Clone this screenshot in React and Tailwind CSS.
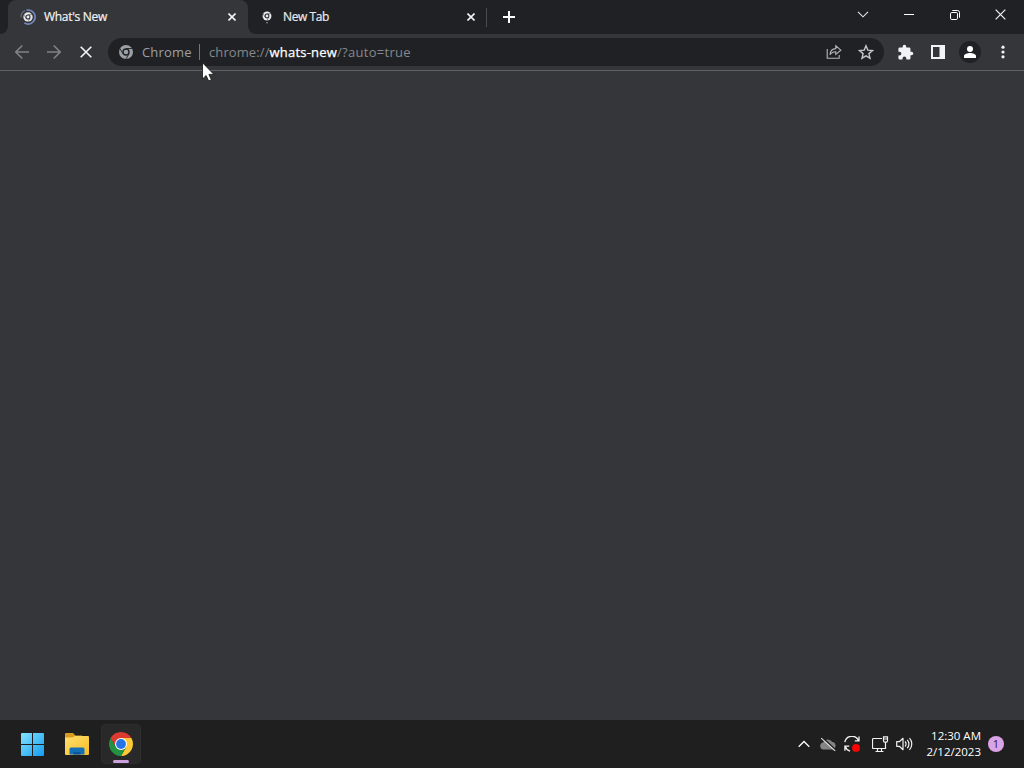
import React from 'react';

function ChromeMark({ size = 14, color = '#9aa0a6', gap = '#202124' }) {
  return (
    <svg width={size} height={size} viewBox="-12 -12 24 24">
      <circle r="12" fill={color} />
      <circle r="6.3" fill={gap} />
      <path d="M0-6H10.4M5.2 3L0 12M-5.2 3L-10.4-6" stroke={gap} strokeWidth="1.5" />
      <circle r="4" fill={color} />
    </svg>
  );
}

function ChromeLogo() {
  return (
    <svg width="24" height="24" viewBox="-12 -12 24 24">
      <path d="M-10.39-6A12 12 0 0 1 10.39-6H0L-5.2 3Z" fill="#dd3b30" />
      <path d="M10.39-6A12 12 0 0 1 0 12L5.2 3L0-6Z" fill="#fcc934" />
      <path d="M0 12A12 12 0 0 1-10.39-6L-5.2 3H5.2Z" fill="#229342" />
      <circle r="6" fill="#fff" />
      <circle r="4.9" fill="#2474e5" />
    </svg>
  );
}

function CloseIcon({ size = 8, width = 2 }) {
  return (
    <svg width={size} height={size} viewBox="0 0 10 10" fill="none" stroke="#f1f3f4" strokeWidth={width}>
      <path d="M.6.6l8.8 8.8M9.4.6L.6 9.4" />
    </svg>
  );
}

function LoadingFavicon() {
  return (
    <svg width="16" height="16" viewBox="-8 -8 16 16">
      <path d="M-1.5-6.8A7 7 0 1 1-3.7 5.9" fill="none" stroke="#7486bd" strokeWidth="1.7" />
      <path d="M-7 .5A7 7 0 0 1-3-6.3" fill="none" stroke="#626779" strokeWidth="1.3" />
      <g transform="scale(.39)">
        <circle r="12" fill="#e8eaed" />
        <circle r="6.6" fill="#35363a" />
        <path d="M0-6H10.4M5.2 3L0 12M-5.2 3L-10.4-6" stroke="#35363a" strokeWidth="1.3" />
        <circle r="3.8" fill="#e8eaed" />
      </g>
    </svg>
  );
}

function TabStrip() {
  return (
    <div className="flex h-[34px] bg-[#202124]">
      <div className="w-2 bg-[#35363a]">
        <div className="h-full rounded-br-lg bg-[#202124]" />
      </div>
      <div className="flex h-full w-[240px] items-center rounded-t-lg bg-[#35363a] pl-3 pr-3">
        <LoadingFavicon />
        <span className="ml-2 flex-1 whitespace-nowrap text-[12px] leading-4 tracking-[-0.3px] text-[#f1f3f4] [-webkit-text-stroke:0.2px]">What's New</span>
        <CloseIcon />
      </div>
      <div className="w-[238px] bg-[#35363a]">
        <div className="flex h-full items-center rounded-bl-lg bg-[#202124] pl-[14px] pr-[11px]">
          <svg width="10" height="14" viewBox="-5 -6 10 14">
            <g transform="scale(.37)">
              <circle r="12" fill="#e8eaed" />
              <circle r="6.6" fill="#202124" />
              <path d="M0-6H10.4M5.2 3L0 12M-5.2 3L-10.4-6" stroke="#202124" strokeWidth="1.3" />
              <circle r="3.8" fill="#e8eaed" />
            </g>
            <circle cy="6.7" r=".8" fill="#9aa0a6" />
          </svg>
          <span className="ml-[11px] flex-1 whitespace-nowrap text-[12px] leading-4 tracking-[-0.4px] text-[#e8eaed] [-webkit-text-stroke:0.2px]">New Tab</span>
          <CloseIcon />
        </div>
      </div>
      <div className="mt-2 h-[19px] w-px bg-[#4a4c50]" />
      <div className="flex w-11 items-center justify-center">
        <svg width="12" height="12" viewBox="0 0 12 12" stroke="#fff" strokeWidth="2">
          <path d="M6 0v12M0 6h12" />
        </svg>
      </div>
      <div className="ml-auto flex h-[29px] text-white">
        <div className="flex w-[46px] items-center justify-center">
          <svg width="12" height="7" viewBox="0 0 12 7" fill="none" stroke="#e8eaed" strokeWidth="1.1">
            <path d="M1 .8l5 5 5-5" />
          </svg>
        </div>
        <div className="flex w-[46px] items-center justify-center">
          <div className="h-px w-[10px] bg-white" />
        </div>
        <div className="flex w-[46px] items-center justify-center">
          <svg width="10" height="10" viewBox="0 0 10 10" fill="none" stroke="#fff">
            <rect x=".5" y="2.5" width="7" height="7" rx="1.3" />
            <path d="M2.3.5H7.5a2 2 0 0 1 2 2V7.7" />
          </svg>
        </div>
        <div className="flex w-[46px] items-center justify-center pr-px">
          <CloseIcon size={11} width={1.1} />
        </div>
      </div>
    </div>
  );
}

function Toolbar() {
  return (
    <div className="flex h-[37px] items-center border-b border-[#606164] bg-[#35363a] pl-[14px]">
      <svg className="mr-4" width="16" height="16" viewBox="0 0 16 16" fill="none" stroke="#818388" strokeWidth="1.6">
        <path d="M15 8H2M8.3 1.5L1.8 8l6.5 6.5" />
      </svg>
      <svg className="mr-4" width="16" height="16" viewBox="0 0 16 16" fill="none" stroke="#818388" strokeWidth="1.6">
        <path d="M1 8h13M7.7 1.5L14.2 8l-6.5 6.5" />
      </svg>
      <div className="mr-[14px] flex w-4 justify-center">
        <CloseIcon size={12} width={1.4} />
      </div>
      <div className="flex h-7 w-[776px] items-center whitespace-nowrap rounded-full bg-[#202124] pl-[11px] pr-[10px] text-[13px] leading-4">
        <ChromeMark />
        <span className="ml-[9px] w-[57px] tracking-[0.18px] text-[#9aa0a6]">Chrome</span>
        <div className="mb-px h-4 w-px bg-[#74777b]" />
        <span className="ml-[9px] flex-1 tracking-[0.2px] text-[#85888c]">
          <span className="tracking-[0.1px]">chrome://</span>
          <span className="text-white [-webkit-text-stroke:0.25px]">whats-new</span>
          <span className="tracking-[0.3px]">/?auto=true</span>
        </span>
        <svg width="16" height="16" viewBox="0 0 16 16" fill="none" stroke="#b4b6ba" strokeWidth="1.1">
          <path d="M1.2 5v9.2h12V11" />
          <path d="M4 10.8C4.2 7 6.2 4.8 9.8 4.6V1.8L14.8 6.2 9.8 10.4V7.7C7.2 7.7 5.3 8.7 4 10.8Z" />
        </svg>
        <svg className="ml-4" width="16" height="16" viewBox="0 0 16 16" fill="none" stroke="#c4c6ca" strokeWidth="1.4">
          <path d="M8 1.8l1.8 4.3 4.7.4-3.6 3.1 1.1 4.6L8 11.8l-4 2.4 1.1-4.6-3.6-3.1 4.7-.4Z" />
        </svg>
      </div>
      <svg className="ml-[13px]" width="17" height="17" viewBox="0 0 24 24" fill="#f1f3f4">
        <path d="M20.5 11H19V7a2 2 0 0 0-2-2h-4V3.5a2.5 2.5 0 0 0-5 0V5H4a2 2 0 0 0-2 2v3.8h1.5a2.7 2.7 0 0 1 0 5.4H2V20a2 2 0 0 0 2 2h3.8v-1.5a2.7 2.7 0 0 1 5.4 0V22H17a2 2 0 0 0 2-2v-4h1.5a2.5 2.5 0 0 0 0-5z" />
      </svg>
      <svg className="ml-4" width="16" height="16" viewBox="0 0 16 16" fill="#f1f3f4">
        <path fillRule="evenodd" d="M1 1h14v14H1ZM3 3v10h6.5V3Z" />
      </svg>
      <div className="ml-[13px] flex h-[22px] w-[22px] items-center justify-center rounded-full bg-[#202124]">
        <svg width="12" height="12" viewBox="0 0 12 12" fill="#fff">
          <circle cx="6" cy="3" r="3" />
          <path d="M0 12v-2c0-2 3.5-3 6-3s6 1 6 3v2Z" />
        </svg>
      </div>
      <svg className="ml-[19.5px]" width="4" height="14" viewBox="0 0 4 14" fill="#f1f3f4">
        <circle cx="2" cy="2.2" r="1.6" />
        <circle cx="2" cy="7" r="1.6" />
        <circle cx="2" cy="11.8" r="1.6" />
      </svg>
    </div>
  );
}

function Taskbar() {
  return (
    <div className="flex h-12 items-center bg-[#1f1f1f]">
      <svg className="ml-5" width="24" height="24" viewBox="0 0 24 24">
        <defs>
          <linearGradient id="win" x1="0" y1="0" x2="24" y2="24" gradientUnits="userSpaceOnUse">
            <stop stopColor="#8ae6ff" />
            <stop offset="1" stopColor="#139df0" />
          </linearGradient>
        </defs>
        <path fill="url(#win)" d="M2 1H12V12H1V2a1 1 0 0 1 1-1ZM13 1H23a1 1 0 0 1 1 1V12H13ZM1 13H12V24H2a1 1 0 0 1-1-1ZM13 13H24V23a1 1 0 0 1-1 1H13Z" />
      </svg>
      <svg className="ml-5" width="26" height="24" viewBox="0 0 26 24">
        <defs>
          <linearGradient id="folder" x2="1" y2="1">
            <stop stopColor="#ffdf70" />
            <stop offset="1" stopColor="#f6bd25" />
          </linearGradient>
        </defs>
        <path fill="#d99b20" d="M2 1h7l2.5 2.5H18V9H1V2a1 1 0 0 1 1-1Z" />
        <path fill="url(#folder)" d="M1 5.5h7.5L11 4h13a1 1 0 0 1 1 1v17a1 1 0 0 1-1 1H2a1 1 0 0 1-1-1Z" />
        <path fill="#1470b8" d="M7 15.5h12a1.5 1.5 0 0 1 1.5 1.5v5.5h-15V17A1.5 1.5 0 0 1 7 15.5Z" />
        <path fill="#0b579c" d="M9.5 20h7v2.5h-7Z" />
      </svg>
      <div className="ml-[11px] flex h-10 w-10 flex-col items-center rounded border border-[#2d2d2d] bg-[#292929] pt-[7px]">
        <ChromeLogo />
        <div className="mt-[4px] h-[3px] w-4 shrink-0 rounded-full bg-[#cda2dc]" />
      </div>

      <div className="ml-auto flex items-center pr-5">
        <svg width="12" height="8" viewBox="0 0 12 8" fill="none" stroke="#fff" strokeWidth="1.3">
          <path d="M.7 6.8L6 1.5l5.3 5.3" />
        </svg>
        <svg className="ml-[10px]" width="16" height="14" viewBox="0 0 16 14">
          <path fill="#858585" d="M3.5 12.5A3.6 3.6 0 0 1 3 5.4 5.2 5.2 0 0 1 12.2 5 3.8 3.8 0 0 1 12.5 12.5Z" />
          <path d="M2 .2L16 13.4" stroke="#1f1f1f" strokeWidth="1.6" />
          <path d="M1.2 1.1L15.2 14" stroke="#e0e0e0" strokeWidth="1.1" />
        </svg>
        <svg className="ml-2" width="16" height="16" viewBox="0 0 16 16" fill="none" stroke="#f1f1f1" strokeWidth="1.3">
          <path d="M.8 6.2A7.2 7.2 0 0 1 14.5 4.6M15 .6v4.2h-4.2M6 15.2A7.3 7.3 0 0 1 1.3 10.5M.9 14.8v-4.6h4.4" />
          <circle cx="12" cy="11.9" r="3.9" fill="#fa0505" stroke="none" />
        </svg>
        <svg className="ml-3" width="17" height="17" viewBox="0 0 17 17" fill="none" stroke="#f1f1f1" strokeWidth="1.2">
          <path d="M10 2.5H1.5a1 1 0 0 0-1 1v8a1 1 0 0 0 1 1H13.5V6M5.5 12.5v3M9.5 12.5v3M3.5 15.5h8" />
          <path d="M11.5.8h4v4a1.3 1.3 0 0 1-1.3 1.3h-1.4a1.3 1.3 0 0 1-1.3-1.3ZM11.5 3h4" />
        </svg>
        <svg className="ml-[7px]" width="17" height="14" viewBox="0 0 17 14" fill="none" stroke="#f1f1f1" strokeWidth="1.2" strokeLinejoin="round">
          <path d="M.7 4.7h2.6L7 1.3v11.4L3.3 9.3H.7Z" />
          <path d="M9 4.5a3.5 3.5 0 0 1 0 5M11.2 2.8a6 6 0 0 1 0 8.4M13.5 1.2a8.5 8.5 0 0 1 0 11.6" />
        </svg>
        <div className="ml-[10px] w-[58px] whitespace-nowrap text-right text-[11.5px] leading-4 text-white">
          <div>12:30 AM</div>
          <div>2/12/2023</div>
        </div>
        <div className="ml-[7px] flex h-4 w-4 items-center justify-center rounded-full bg-[#d9a3e6] text-[11px] leading-4 text-[#2b2030]">1</div>
      </div>
    </div>
  );
}

export default function App() {
  return (
    <div className="relative flex h-[768px] w-[1024px] flex-col overflow-hidden bg-[#35363a] font-['Open_Sans','Noto_Sans',sans-serif]">
      <TabStrip />
      <Toolbar />
      <main className="flex-1" />
      <Taskbar />
      <svg className="absolute left-[202px] top-[62px]" width="13" height="20" viewBox="0 0 13 20">
        <path d="M.5.8V17l3.6-3.5L6.7 19l2.7-1.2-2.5-5.4h5Z" fill="#fff" stroke="#111" strokeWidth=".8" />
      </svg>
    </div>
  );
}
